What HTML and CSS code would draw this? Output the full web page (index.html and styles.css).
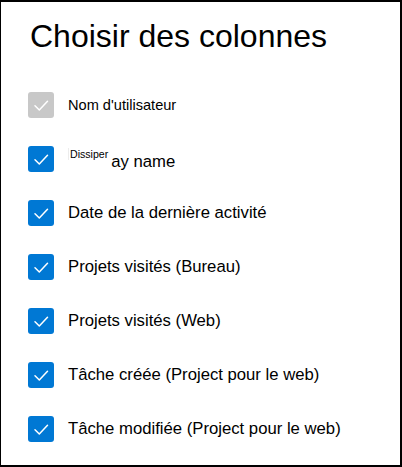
FILE: index.html
```html
<!DOCTYPE html>
<html lang="fr">
<head>
<meta charset="utf-8">
<link rel="stylesheet" href="styles.css">
</head>
<body>
<div class="panel">
  <h1 class="title">Choisir des colonnes</h1>
  <ul class="list">
    <li class="row">
      <span class="box box-disabled"><svg viewBox="0 0 26 26"><path d="M7 13.8 L11.3 18 L19.5 9.2"/></svg></span>
      <span class="label label-small">Nom d'utilisateur</span>
    </li>
    <li class="row">
      <span class="box"><svg viewBox="0 0 26 26"><path d="M7 13.8 L11.3 18 L19.5 9.2"/></svg></span>
      <span class="label label-overlay"><span class="tip">Dissiper</span><span class="rest">ay name</span></span>
    </li>
    <li class="row">
      <span class="box"><svg viewBox="0 0 26 26"><path d="M7 13.8 L11.3 18 L19.5 9.2"/></svg></span>
      <span class="label">Date de la dernière activité</span>
    </li>
    <li class="row">
      <span class="box"><svg viewBox="0 0 26 26"><path d="M7 13.8 L11.3 18 L19.5 9.2"/></svg></span>
      <span class="label">Projets visités (Bureau)</span>
    </li>
    <li class="row">
      <span class="box"><svg viewBox="0 0 26 26"><path d="M7 13.8 L11.3 18 L19.5 9.2"/></svg></span>
      <span class="label">Projets visités (Web)</span>
    </li>
    <li class="row">
      <span class="box"><svg viewBox="0 0 26 26"><path d="M7 13.8 L11.3 18 L19.5 9.2"/></svg></span>
      <span class="label">Tâche créée (Project pour le web)</span>
    </li>
    <li class="row">
      <span class="box"><svg viewBox="0 0 26 26"><path d="M7 13.8 L11.3 18 L19.5 9.2"/></svg></span>
      <span class="label">Tâche modifiée (Project pour le web)</span>
    </li>
  </ul>
</div>
</body>
</html>
```

FILE: styles.css
```css
html, body {
  margin: 0;
  padding: 0;
  background: #fff;
}
body {
  font-family: "Liberation Sans", Arial, sans-serif;
  color: #000;
}
.panel {
  box-sizing: border-box;
  width: 402px;
  height: 467px;
  border-style: solid;
  border-color: #000;
  border-width: 2px 2px 2px 1px;
  padding: 16px 0 0 27px;
}
.title {
  margin: 0 0 0 2px;
  font-size: 32px;
  font-weight: normal;
  line-height: 36px;
  letter-spacing: 0;
}
.list {
  list-style: none;
  margin: 38px 0 0 0;
  padding: 0;
  display: flex;
  flex-direction: column;
  gap: 28px;
}
.row {
  display: flex;
  align-items: center;
  gap: 14px;
  height: 26px;
}
.box {
  flex: none;
  width: 26px;
  height: 26px;
  border-radius: 3px;
  background: #0078d4;
  display: flex;
}
.box-disabled {
  background: #c8c8c8;
}
.box svg {
  width: 26px;
  height: 26px;
}
.box path {
  fill: none;
  stroke: #fff;
  stroke-width: 1.5;
  stroke-linecap: round;
  stroke-linejoin: round;
}
.label {
  font-size: 16.7px;
  line-height: 20px;
  white-space: nowrap;
}
.label-small {
  font-size: 14.6px;
}
.label-overlay {
  display: flex;
  align-items: flex-start;
  height: 26px;
}
.tip {
  font-size: 10.6px;
  line-height: 12px;
  margin-top: 2px;
  padding-left: 1px;
  border-left: 1px solid #ececec;
}
.rest {
  margin-left: 3px;
  margin-top: 6px;
}
```
